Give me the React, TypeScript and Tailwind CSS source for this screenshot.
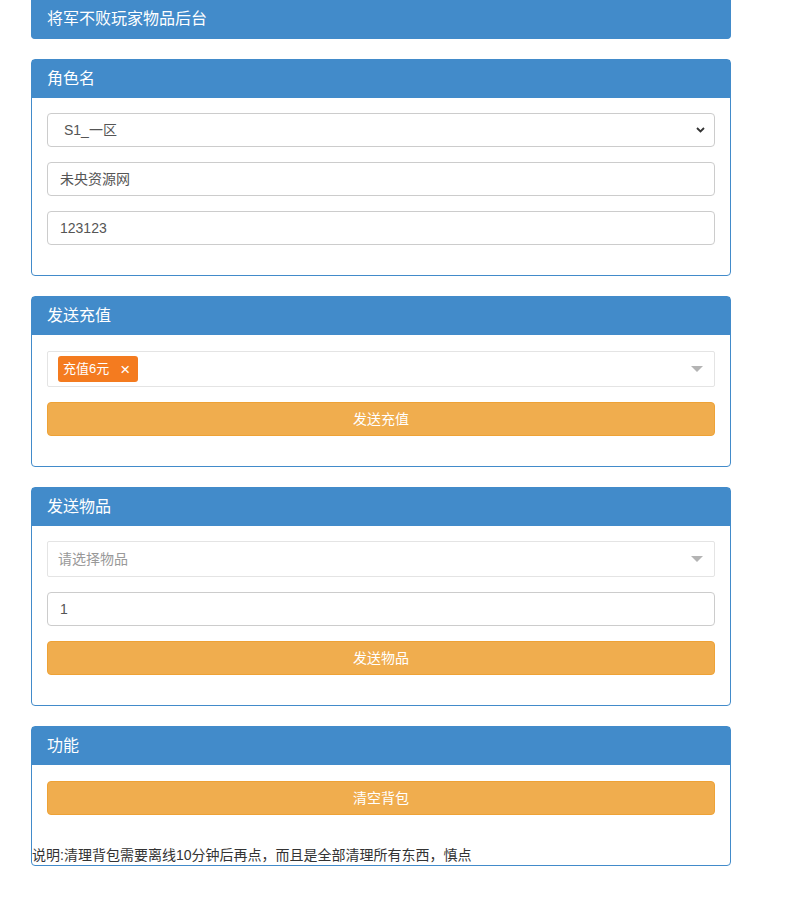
import React from "react"

const font = { fontFamily: '"Liberation Sans", "Noto Sans CJK SC", sans-serif' }

function Panel({ title, children, footer }: { title: string; children: React.ReactNode; footer?: React.ReactNode }) {
  return (
    <div className="mb-5 rounded border border-[#428bca] bg-white">
      <div className="h-[38px] bg-[#428bca] px-[15px] text-[16px] leading-[38px] text-white">{title}</div>
      <div className="p-[15px]">{children}</div>
      {footer}
    </div>
  )
}

function Input({ value }: { value: string }) {
  return (
    <div className="mb-[15px] h-[34px] rounded border border-[#ccc] px-3 text-[14px] leading-[32px] text-[#555]">{value}</div>
  )
}

function WarnButton({ label, nudge }: { label: string; nudge?: boolean }) {
  return (
    <div
      className={`mb-[15px] h-[34px] rounded border border-[#eea236] bg-[#f0ad4e] text-center text-[14px] leading-[32px] text-white ${nudge ? "mt-px" : ""}`}
    >
      {label}
    </div>
  )
}

function Select2({ children, multiple }: { children: React.ReactNode; multiple?: boolean }) {
  return (
    <div
      className={`mb-[15px] flex h-[36px] items-center rounded-[2px] border border-[#e4e4e4] pr-[11px] ${multiple ? "mt-px" : ""}`}
    >
      <div className="flex flex-1 items-center">{children}</div>
      <svg width="12" height="6" viewBox="0 0 12 6">
        <path d="M0 0 L12 0 L6 6 Z" fill="#b4b4b4" />
      </svg>
    </div>
  )
}

export default function App() {
  return (
    <div className="min-h-screen bg-white" style={font}>
      <div className="ml-[31px] w-[700px]">
        {/* Title */}
        <div className="mb-5 h-[39px] rounded-b border border-t-0 border-[#428bca] bg-[#428bca] px-[15px] text-[16px] leading-[37px] text-white">
          将军不败玩家物品后台
        </div>

        <Panel title="角色名">
          <div className="relative mb-[15px] h-[34px] rounded border border-[#ccc] pl-4 text-[14px] leading-[32px] text-[#555]">
            S1_一区
            <svg className="absolute right-[9px] top-[13px]" width="9" height="6" viewBox="0 0 9 6">
              <path d="M1 1 L4.5 4.5 L8 1" fill="none" stroke="#333" strokeWidth="1.8" />
            </svg>
          </div>
          <Input value="未央资源网" />
          <Input value="123123" />
        </Panel>

        <Panel title="发送充值">
          <Select2 multiple>
            <span className="ml-[10px] flex h-[26px] items-center rounded-[3px] bg-[#f47b1f] pl-[5px] pr-[6px] text-[13px] text-white">
              充值6元
              <span className="ml-[11px] mr-[2px] text-[17px] leading-none">×</span>
            </span>
          </Select2>
          <WarnButton label="发送充值" />
        </Panel>

        <Panel title="发送物品">
          <Select2>
            <span className="pl-[10px] text-[14px] text-[#999]">请选择物品</span>
          </Select2>
          <Input value="1" />
          <WarnButton label="发送物品" />
        </Panel>

        <Panel
          title="功能"
          footer={
            <div className="h-[20px] text-[14px] leading-[20px] text-[#333]">
              说明:清理背包需要离线10分钟后再点，而且是全部清理所有东西，慎点
            </div>
          }
        >
          <WarnButton label="清空背包" nudge />
        </Panel>
      </div>
    </div>
  )
}
